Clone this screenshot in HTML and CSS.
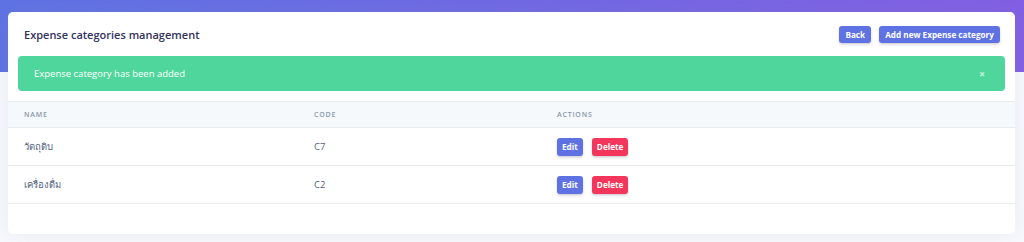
FILE: index.html
```html
<!DOCTYPE html>
<html lang="en">
<head>
<meta charset="utf-8">
<title>Expense categories management</title>
<link rel="stylesheet" href="styles.css">
</head>
<body>
<div class="hero"></div>
<main class="main">
  <section class="card">
    <div class="card-header">
      <h3 class="card-title">Expense categories management</h3>
      <div class="header-actions">
        <a class="btn btn-primary" href="#">Back</a>
        <a class="btn btn-primary" href="#">Add new Expense category</a>
      </div>
    </div>
    <div class="alert">
      <span>Expense category has been added</span>
      <span class="alert-close">×</span>
    </div>
    <table class="table">
      <thead>
        <tr>
          <th class="col-name">Name</th>
          <th class="col-code">Code</th>
          <th class="col-actions">Actions</th>
        </tr>
      </thead>
      <tbody>
        <tr>
          <td>วัตถุดิบ</td>
          <td>C7</td>
          <td><span class="row-actions"><a class="btn btn-primary btn-row" href="#">Edit</a><a class="btn btn-danger btn-row" href="#">Delete</a></span></td>
        </tr>
        <tr>
          <td>เครื่องดื่ม</td>
          <td>C2</td>
          <td><span class="row-actions"><a class="btn btn-primary btn-row" href="#">Edit</a><a class="btn btn-danger btn-row" href="#">Delete</a></span></td>
        </tr>
      </tbody>
    </table>
  </section>
</main>
</body>
</html>
```
FILE: styles.css
```css
* { box-sizing: border-box; }
html, body { margin: 0; padding: 0; }
body {
  background: #f8f9fe;
  font-family: "Open Sans", "Noto Sans", "DejaVu Sans", sans-serif;
  color: #525f7f;
  height: 242px;
  overflow: hidden;
}
.hero {
  height: 72px;
  background: linear-gradient(87deg, #5e72e4 0%, #825ee4 100%);
}
.main {
  margin-top: -60px;
  padding: 0 9px 0 8px;
}
.card {
  background: #fff;
  border-radius: 5px;
  box-shadow: 0 0 1.4rem 0 rgba(136, 152, 170, .15);
  padding-bottom: 30px;
}
.card-header {
  display: flex;
  align-items: center;
  justify-content: space-between;
  padding: 14px 15px 0 16px;
  height: 31px;
}
.card-title {
  margin: 0;
  font-size: 11px;
  font-weight: 600;
  color: #32325d;
}
.header-actions {
  display: flex;
  gap: 8px;
}
.btn {
  display: inline-flex;
  align-items: center;
  justify-content: center;
  height: 17px;
  padding: 0 6px;
  border-radius: 3px;
  font-size: 8.2px;
  font-weight: 700;
  color: #fff;
  text-decoration: none;
  box-shadow: 0 2px 3px rgba(50, 50, 93, .15), 0 1px 1px rgba(0, 0, 0, .08);
}
.btn-primary { background: #5e72e4; }
.btn-danger { background: #f5365c; }
.alert {
  display: flex;
  align-items: center;
  justify-content: space-between;
  margin: 13px 10px 0 10px;
  height: 35px;
  padding: 0 20px 0 16px;
  background: #4fd69c;
  border-radius: 4px;
  color: #fff;
  font-size: 9.5px;
}
.alert-close {
  font-size: 10px;
  font-weight: 700;
  opacity: .7;
}
.table {
  margin-top: 10px;
  width: 100%;
  border-collapse: collapse;
  table-layout: fixed;
}
.table th {
  height: 26px;
  padding: 0 16px;
  text-align: left;
  background: #f6f9fc;
  color: #8898aa;
  font-size: 7px;
  font-weight: 600;
  letter-spacing: .8px;
  text-transform: uppercase;
  border-top: 1px solid #e9ecef;
  border-bottom: 1px solid #e9ecef;
}
.col-name { width: 290px; }
.col-code { width: 243px; }
.table td {
  height: 38px;
  padding: 0 16px;
  font-size: 9.5px;
  color: #525f7f;
  border-bottom: 1px solid #e9ecef;
}
.row-actions {
  display: flex;
  gap: 9px;
}
.btn-row {
  height: 18px;
  padding: 0 5px;
}
```
